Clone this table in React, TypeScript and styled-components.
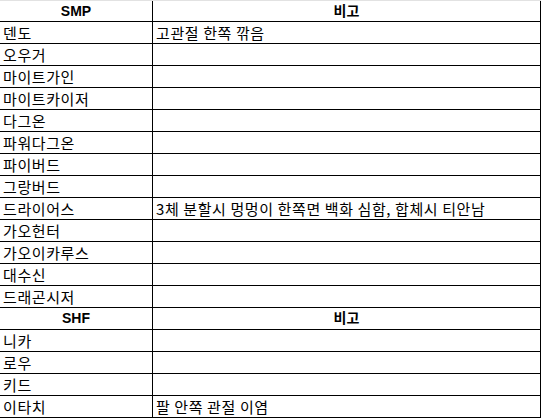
import React from "react";
import styled, { createGlobalStyle } from "styled-components";

const Global = createGlobalStyle`
  html, body { margin: 0; padding: 0; background: #ffffff; }
  body { font-family: "Noto Sans CJK KR", "Noto Sans", sans-serif; }
`;

const Sheet = styled.div`
  width: 541px;
  height: 419px;
  box-sizing: border-box;
  border-top: 1px solid #e2e2e2;
  background: #ffffff;
  display: flex;
  flex-direction: column;
  overflow: hidden;
`;

const Row = styled.div<{ $first?: boolean }>`
  display: grid;
  grid-template-columns: 153px 388px;
  height: ${(p) => (p.$first ? 21 : 22)}px;
  box-sizing: border-box;
  border-bottom: 1px solid #000000;
  flex: none;
`;

const Cell = styled.div<{ $head?: boolean }>`
  box-sizing: border-box;
  border-right: 1px solid #000000;
  display: flex;
  align-items: center;
  justify-content: ${(p) => (p.$head ? "center" : "flex-start")};
  padding: 0 0 1px ${(p) => (p.$head ? 0 : 3)}px;
  font-family: ${(p) =>
    p.$head
      ? '"Liberation Sans", "Noto Sans CJK KR", sans-serif'
      : '"Noto Sans CJK KR", sans-serif'};
  font-size: ${(p) => (p.$head ? 14 : 15)}px;
  font-weight: ${(p) => (p.$head ? 700 : 400)};
  letter-spacing: ${(p) => (p.$head ? 0 : 0.6)}px;
  color: #000000;
  white-space: nowrap;
  line-height: 1;
`;

type Item = { name: string; note?: string; head?: boolean };

const rows: Item[] = [
  { name: "SMP", note: "비고", head: true },
  { name: "덴도", note: "고관절 한쪽 깎음" },
  { name: "오우거" },
  { name: "마이트가인" },
  { name: "마이트카이저" },
  { name: "다그온" },
  { name: "파워다그온" },
  { name: "파이버드" },
  { name: "그랑버드" },
  { name: "드라이어스", note: "3체 분할시 멍멍이 한쪽면 백화 심함, 합체시 티안남" },
  { name: "가오헌터" },
  { name: "가오이카루스" },
  { name: "대수신" },
  { name: "드래곤시저" },
  { name: "SHF", note: "비고", head: true },
  { name: "니카" },
  { name: "로우" },
  { name: "키드" },
  { name: "이타치", note: "팔 안쪽 관절 이염" },
];

export default function App() {
  return (
    <>
      <Global />
      <Sheet>
        {rows.map((r, i) => (
          <Row key={i} $first={i === 0}>
            <Cell $head={r.head}>{r.name}</Cell>
            <Cell $head={r.head}>{r.note ?? ""}</Cell>
          </Row>
        ))}
      </Sheet>
    </>
  );
}
